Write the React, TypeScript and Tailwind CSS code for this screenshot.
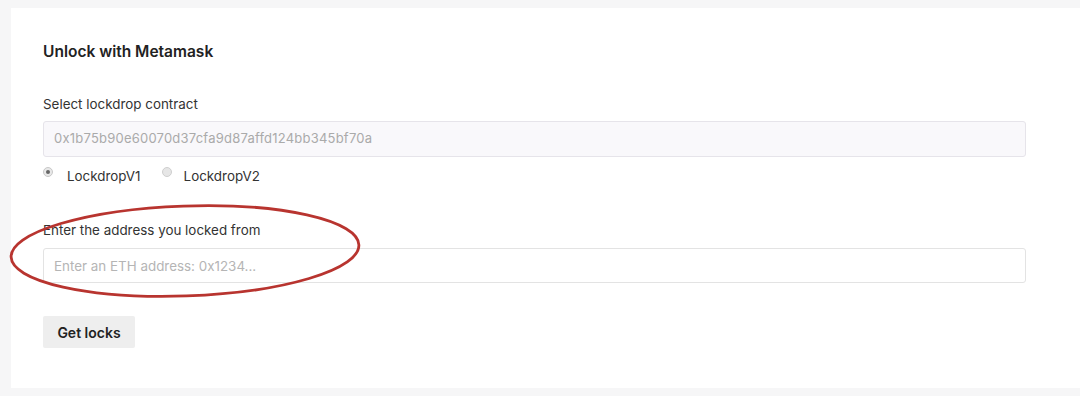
export default function App() {
  return (
    <div className="h-[396px] w-[1080px] bg-[#f6f6f7] pt-2 pl-[11px] overflow-hidden" style={{ fontFamily: "Inter, 'Noto Sans', sans-serif" }}>
      <div className="relative h-[380px] bg-white pl-8 pr-[54px] pt-[34px]">
        <h2 className="text-[15.5px] leading-5 font-semibold text-[#222]">Unlock with Metamask</h2>

        {/* Contract */}
        <div className="mt-8 text-[13.4px] leading-5 text-[#333]">Select lockdrop contract</div>
        <div className="mt-[7px] flex h-[36px] items-center rounded-[3px] border border-[#e6e4ea] bg-[#f9f8fb] px-[10px] text-[13px] tracking-[0.22px] text-[#aaa]">
          0x1b75b90e60070d37cfa9d87affd124bb345bf70a
        </div>
        <div className="mt-[9px] flex h-5 items-center text-[13.4px] text-[#333]">
          <span className="mb-2 flex h-[10px] w-[10px] items-center justify-center rounded-full border border-[#c8c8c8] bg-[#e8e8e8]">
            <span className="h-[4px] w-[4px] rounded-full bg-[#666]" />
          </span>
          <span className="ml-[14px]">LockdropV1</span>
          <span className="mb-2 ml-[21px] h-[10px] w-[10px] rounded-full border border-[#cfcfcf] bg-[#e6e6e6]" />
          <span className="ml-[12px]">LockdropV2</span>
        </div>

        {/* Address */}
        <div className="mt-[34px] text-[13.4px] leading-5 text-[#333]">Enter the address you locked from</div>
        <input
          className="mt-2 block h-[35px] w-full rounded-[3px] border border-[#e3e3e3] bg-white px-[10px] text-[13.4px] outline-none placeholder:text-[#b5b5b5]"
          placeholder="Enter an ETH address: 0x1234..."
        />

        <button className="mt-[33px] h-8 w-[92px] rounded-[2px] bg-[#eeeeee] text-[14px] font-semibold text-[#222]">
          Get locks
        </button>

        {/* Red annotation circle */}
        <svg className="pointer-events-none absolute left-[-6px] top-[190px]" width="370" height="110" viewBox="0 0 370 110">
          <ellipse cx="180" cy="53" rx="174" ry="45" fill="none" stroke="#b8342f" strokeWidth="2.8" transform="rotate(-2 180 53)" />
        </svg>
      </div>
    </div>
  );
}
